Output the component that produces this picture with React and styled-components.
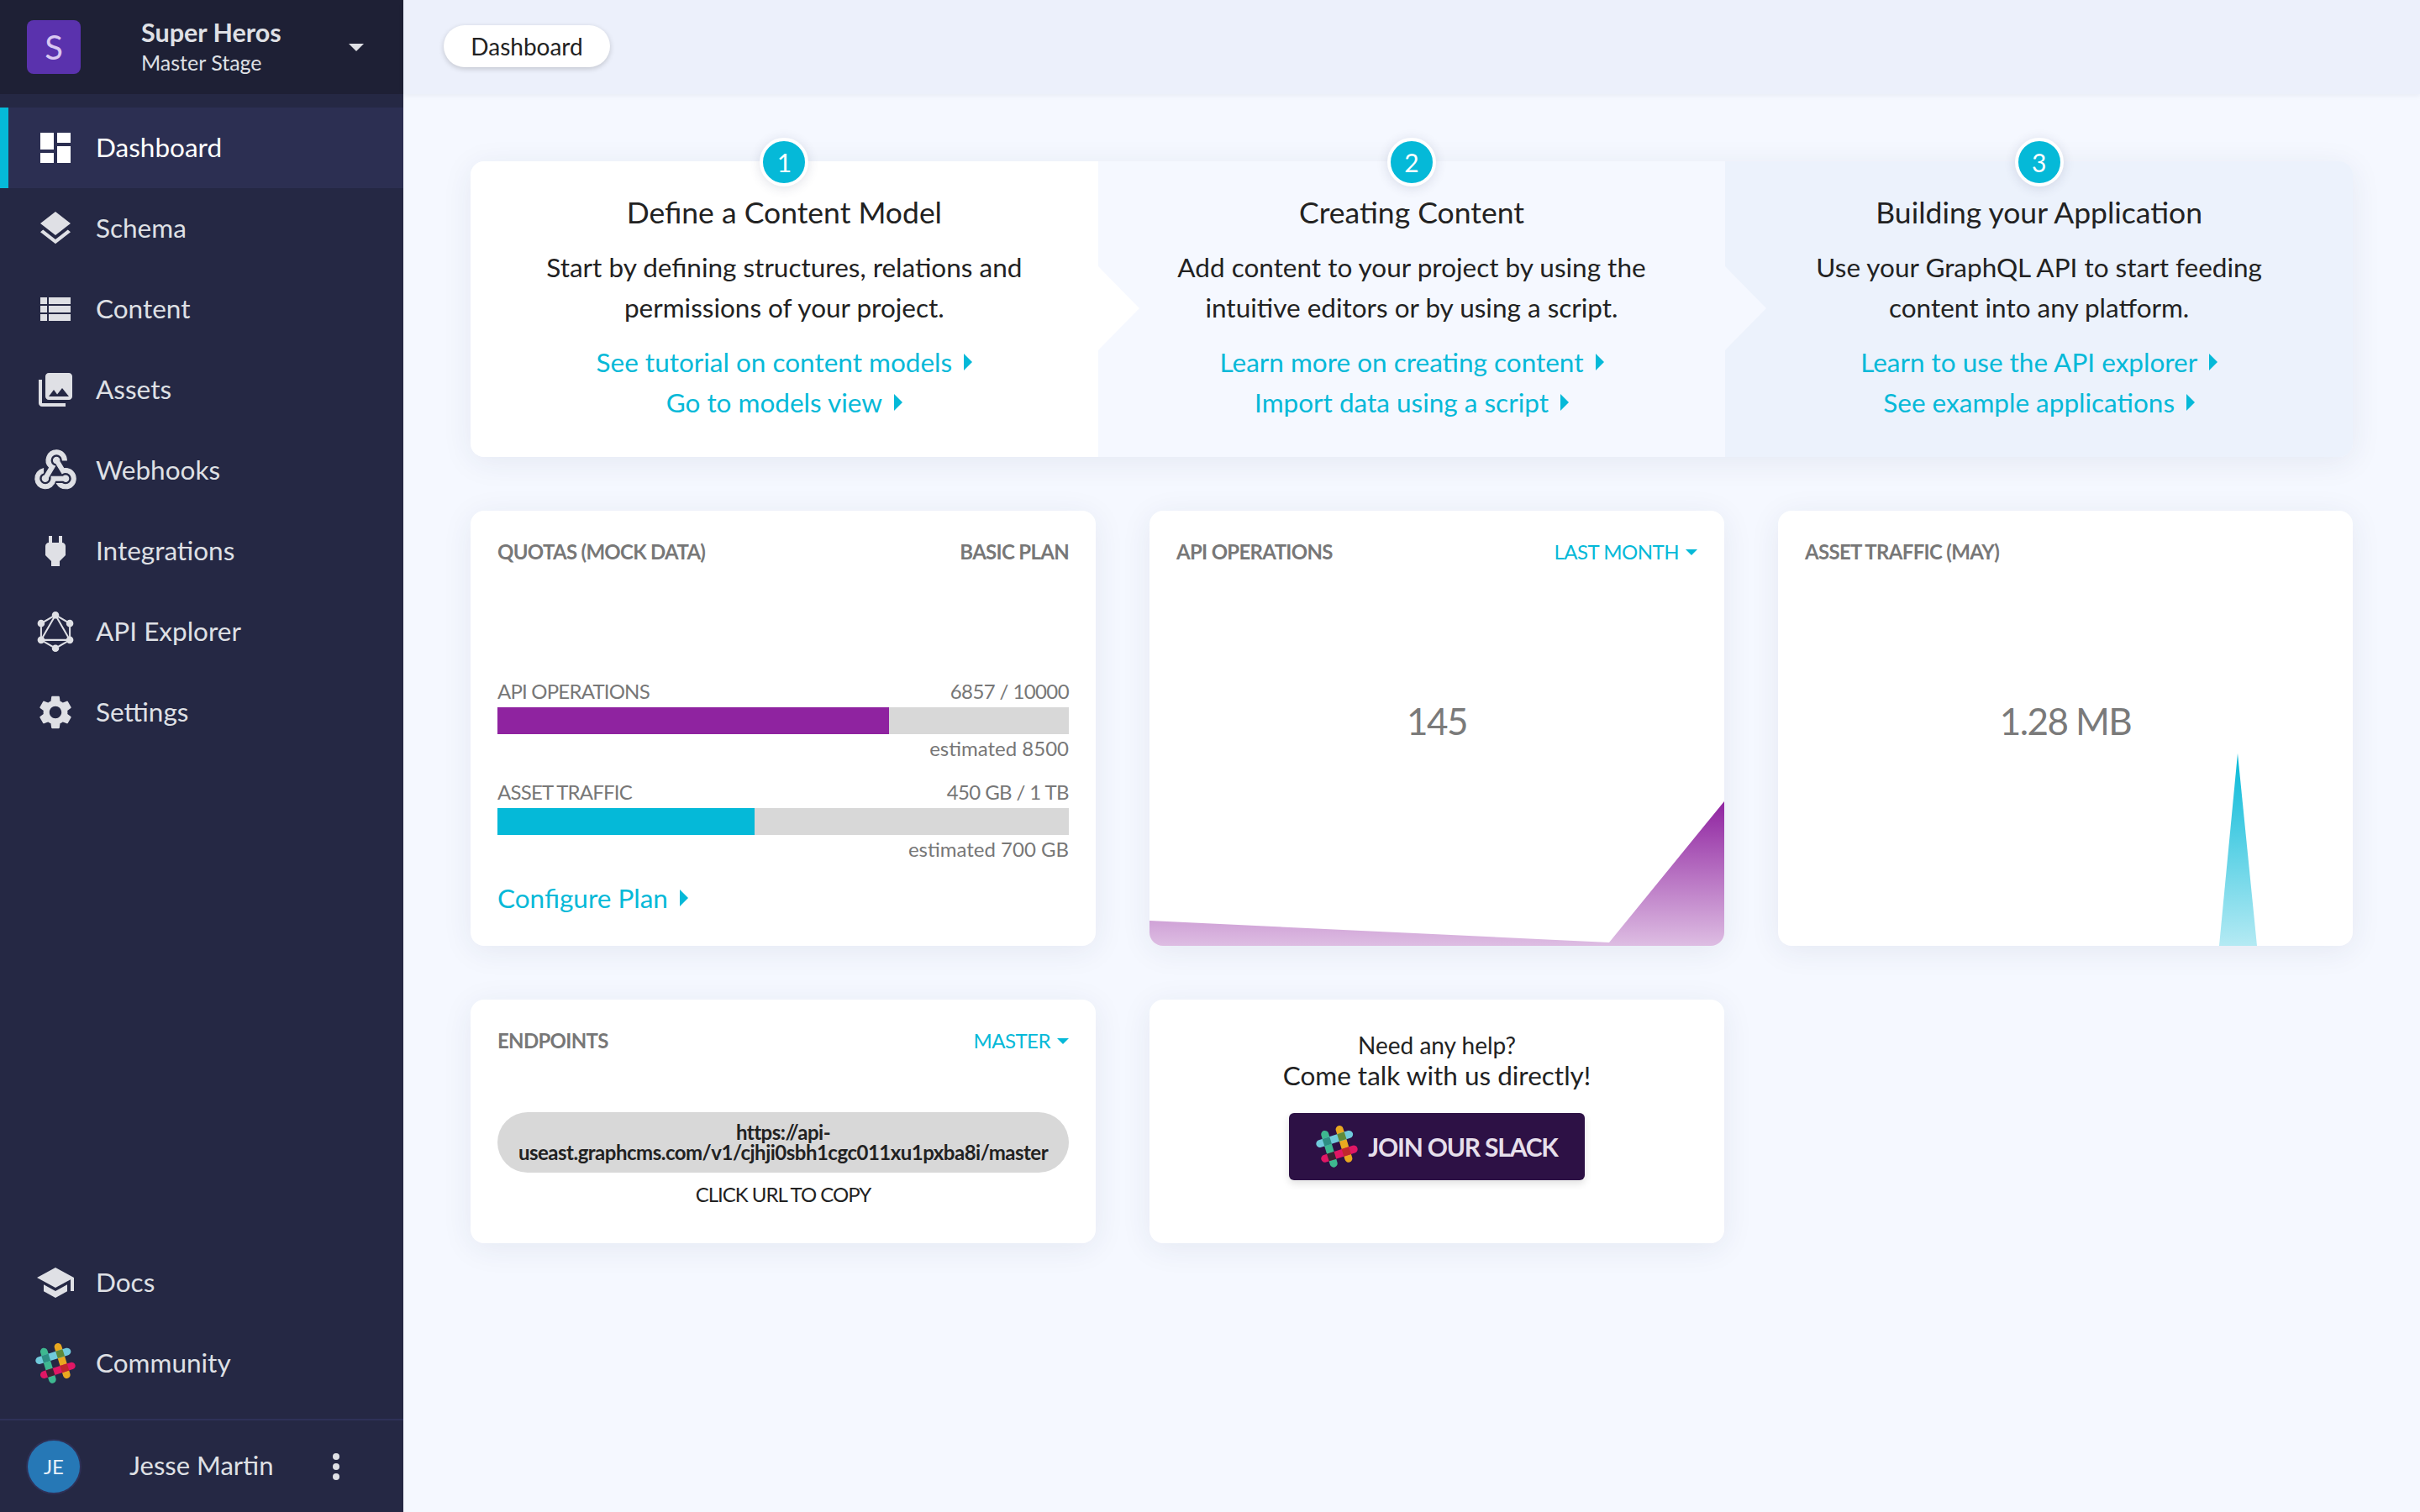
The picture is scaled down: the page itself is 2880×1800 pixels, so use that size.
import React from "react";
import styled, { createGlobalStyle } from "styled-components";
import {
  MdDashboard,
  MdLayers,
  MdViewList,
  MdPhotoLibrary,
  MdWebhook,
  MdPower,
  MdSettings,
  MdSchool,
} from "react-icons/md";
import { SiGraphql } from "react-icons/si";

const CYAN = "#05b9d8";
const PURPLE = "#8f23a0";

const GlobalStyle = createGlobalStyle`
  html, body {
    margin: 0;
    padding: 0;
    background: #f5f8ff;
    font-family: "Lato", "Open Sans", sans-serif;
    color: #222;
  }
  * { box-sizing: border-box; }
`;

const Page = styled.div`
  display: flex;
  width: 100%;
  min-height: 100vh;
`;

const Sidebar = styled.aside`
  width: 480px;
  flex-shrink: 0;
  height: 100vh;
  display: flex;
  flex-direction: column;
  background: #252844;
  color: #dfe0e5;
`;

const ProjectHeader = styled.div`
  height: 112px;
  display: flex;
  align-items: center;
  padding: 0 47px 0 32px;
  background: #1e2035;
`;

const ProjectBadge = styled.div`
  width: 64px;
  height: 64px;
  border-radius: 8px;
  background: #5a32ad;
  color: #d9c8f2;
  font-size: 40px;
  display: flex;
  align-items: center;
  justify-content: center;
`;

const ProjectText = styled.div`
  margin-left: 72px;
  flex: 1;
`;

const ProjectName = styled.div`
  font-size: 30.5px;
  font-weight: 700;
  line-height: 36px;
`;

const ProjectStage = styled.div`
  font-size: 25px;
  line-height: 36px;
`;

const Caret = styled.span`
  width: 0;
  height: 0;
  border-left: ${(p) => p.$size}px solid transparent;
  border-right: ${(p) => p.$size}px solid transparent;
  border-top: ${(p) => p.$size}px solid ${(p) => p.$color};
  margin-left: ${(p) => p.$gap || 0}px;
`;

const NavList = styled.nav`
  padding-top: ${(p) => p.$top || 0}px;
  padding-bottom: ${(p) => p.$bottom || 0}px;
`;

const NavRow = styled.div`
  height: 96px;
  display: flex;
  align-items: center;
  gap: 24px;
  padding-left: 32px;
  border-left: 10px solid ${(p) => (p.$active ? CYAN : "transparent")};
  background: ${(p) => (p.$active ? "#2c2f52" : "transparent")};
  color: ${(p) => (p.$active ? "#fff" : "#dfe0e5")};
  font-size: 31.5px;
`;

const NavIcon = styled.span`
  width: 48px;
  height: 48px;
  display: flex;
  align-items: center;
  justify-content: center;
  flex-shrink: 0;
`;

const WebhookIcon = styled(MdWebhook)`
  flex-shrink: 0;
  path:not([fill="none"]) {
    stroke: currentColor;
    stroke-width: 0.5;
  }
`;

const NavLabel = styled.span`
  padding-bottom: 3px;
`;

const Spacer = styled.div`
  flex: 1;
`;

const UserRow = styled.div`
  height: 111px;
  border-top: 2px solid #2e3158;
  display: flex;
  align-items: center;
  padding: 0 0 0 33px;
  font-size: 31px;
`;

const Avatar = styled.div`
  width: 62px;
  height: 62px;
  border-radius: 50%;
  background: #2678b6;
  box-shadow: 0 0 0 2px #2e3158;
  color: #e8f0f8;
  font-size: 24px;
  display: flex;
  align-items: center;
  justify-content: center;
`;

const UserName = styled.div`
  margin-left: 59px;
  padding-bottom: 3px;
  flex: 1;
`;

const Dots = styled.div`
  display: flex;
  flex-direction: column;
  gap: 4px;
  margin-right: 76px;
`;

const Dot = styled.span`
  width: 8px;
  height: 8px;
  border-radius: 50%;
  background: #dfe0e5;
`;

const Main = styled.main`
  flex: 1;
  min-width: 0;
`;

const TopBar = styled.header`
  height: 112px;
  background: #ecf0fb;
  box-shadow: 0 2px 6px rgba(40, 50, 90, 0.06);
  display: flex;
  align-items: center;
  padding: 0 0 2px 48px;
`;

const Crumb = styled.div`
  height: 50px;
  width: 198px;
  border-radius: 25px;
  background: #fff;
  box-shadow: 0 2px 6px rgba(0, 0, 0, 0.18);
  font-size: 28px;
  color: #222;
  display: flex;
  align-items: center;
  justify-content: center;
`;

const Content = styled.div`
  padding: 80px;
  display: flex;
  flex-direction: column;
  gap: 64px;
`;

const Steps = styled.section`
  display: grid;
  grid-template-columns: repeat(3, 1fr);
  height: 352px;
  border-radius: 16px;
  box-shadow: 0 6px 36px rgba(40, 50, 90, 0.08);
`;

const Step = styled.div`
  position: relative;
  background: ${(p) => p.$bg};
  padding-top: 39px;
  text-align: center;
  border-radius: ${(p) => p.$radius};

  ${(p) =>
    p.$arrow &&
    `&::after {
      content: "";
      position: absolute;
      z-index: 1;
      top: 125px;
      left: 100%;
      border-top: 50px solid transparent;
      border-bottom: 50px solid transparent;
      border-left: 49px solid ${p.$bg};
    }`}
`;

const StepNumber = styled.div`
  position: absolute;
  z-index: 2;
  top: -28px;
  left: 50%;
  margin-left: -29px;
  width: 58px;
  height: 58px;
  border-radius: 50%;
  border: 4px solid #fff;
  background: ${CYAN};
  color: #fff;
  font-size: 30px;
  box-shadow: 0 2px 14px rgba(40, 50, 90, 0.14);
  display: flex;
  align-items: center;
  justify-content: center;
`;

const StepTitle = styled.h2`
  margin: 0 0 19px;
  font-size: 35.5px;
  line-height: 44px;
  font-weight: 400;
  color: #222;
`;

const StepBody = styled.p`
  margin: 0 0 17px;
  font-size: 31.5px;
  line-height: 48px;
  color: #222;
`;

const StepLink = styled.div`
  font-size: 31.5px;
  line-height: 48px;
  color: ${CYAN};
  display: flex;
  align-items: center;
  justify-content: center;
`;

const Arrow = styled.span`
  width: 0;
  height: 0;
  margin-left: 14px;
  border-top: 10px solid transparent;
  border-bottom: 10px solid transparent;
  border-left: 10px solid ${CYAN};
`;

const CardGrid = styled.section`
  display: grid;
  grid-template-columns: 744px 684px 684px;
  grid-template-rows: 518px 290px;
  gap: 64px;
`;

const Card = styled.div`
  background: #fff;
  border-radius: 16px;
  box-shadow: 0 6px 36px rgba(40, 50, 90, 0.08);
  overflow: hidden;
  display: flex;
  flex-direction: column;
`;

const CardHead = styled.div`
  display: flex;
  justify-content: space-between;
  padding: 32px 32px 0;
  line-height: 34px;
  font-size: 24px;
`;

const CardTitle = styled.div`
  font-weight: 700;
  color: #777;
  letter-spacing: -0.7px;
`;

const CardSelect = styled.div`
  color: ${CYAN};
  display: flex;
  align-items: center;
  letter-spacing: -0.5px;
`;

const Quota = styled.div`
  padding: 134px 32px 0;
  display: flex;
  flex-direction: column;
`;

const QuotaLine = styled.div`
  display: flex;
  justify-content: space-between;
  font-size: 24px;
  line-height: 30px;
  color: #777;
  letter-spacing: -0.6px;
`;

const QuotaName = styled.span`
  letter-spacing: -0.8px;
`;

const Estimate = styled.div`
  margin: 2px 0 22px;
  font-size: 24px;
  line-height: 30px;
  color: #777;
  text-align: right;
`;

const Bar = styled.div`
  height: 32px;
  margin-top: 4px;
  background: #d8d8d8;
`;

const BarFill = styled.div`
  height: 100%;
  background: ${(p) => p.$color};
`;

const PlanLink = styled(StepLink)`
  justify-content: flex-start;
  line-height: 40px;
  margin-top: 1px;
`;

const BigNumber = styled.div`
  margin-top: 156px;
  font-size: 44px;
  line-height: 56px;
  color: #7a7a7a;
  text-align: center;
  letter-spacing: -1.6px;
`;

const Chart = styled.svg`
  display: block;
  margin-top: auto;
  flex-shrink: 0;
`;

const EndpointPill = styled.div`
  margin: 68px 32px 0;
  height: 72px;
  border-radius: 36px;
  background: #d8d8d8;
  font-size: 24px;
  line-height: 24px;
  font-weight: 700;
  color: #222;
  text-align: center;
  letter-spacing: -0.5px;
  display: flex;
  align-items: center;
  justify-content: center;
`;

const CopyHint = styled.div`
  margin-top: 11px;
  font-size: 24px;
  line-height: 30px;
  text-align: center;
  color: #222;
  letter-spacing: -1px;
`;

const HelpCard = styled(Card)`
  align-items: center;
  padding-top: 36px;
  text-align: center;
`;

const HelpSmall = styled.div`
  font-size: 28px;
  line-height: 36px;
`;

const HelpLarge = styled.div`
  font-size: 31.5px;
  line-height: 37px;
`;

const SlackButton = styled.div`
  margin-top: 26px;
  width: 352px;
  height: 80px;
  border-radius: 6px;
  background: #2d1145;
  box-shadow: 0 4px 10px rgba(0, 0, 0, 0.12);
  color: #e6dfeb;
  font-size: 30px;
  font-weight: 700;
  letter-spacing: -1.2px;
  display: flex;
  align-items: center;
  justify-content: center;
  gap: 12px;
`;

const OVERLAPS = [
  { x: 38.3, y: 54.2, fill: "#2d8f83" },
  { x: 88.8, y: 38, fill: "#5f8a3a" },
  { x: 53.7, y: 105.7, fill: "#3a2233" },
  { x: 104.6, y: 89.2, fill: "#c0272d" },
];

const SlackMark = ({ size = 48 }) => (
  <svg width={size} height={size} viewBox="0 0 144 144" aria-hidden="true">
    <g fill="none" strokeWidth="26" strokeLinecap="round">
      <path d="M31 30 L61 130" stroke="#3eb890" />
      <path d="M81 13 L112 113" stroke="#e9a820" />
      <path d="M14 62 L114 30" stroke="#70cadb" />
      <path d="M31 113 L130 81" stroke="#e01765" />
    </g>
    {OVERLAPS.map((o) => (
      <rect
        key={o.fill}
        x={o.x - 13}
        y={o.y - 13}
        width="26"
        height="26"
        fill={o.fill}
        transform={`rotate(-17.7 ${o.x} ${o.y})`}
      />
    ))}
  </svg>
);

const NAV_TOP = [
  { label: "Dashboard", icon: <MdDashboard size={48} />, active: true },
  { label: "Schema", icon: <MdLayers size={48} /> },
  { label: "Content", icon: <MdViewList size={48} /> },
  { label: "Assets", icon: <MdPhotoLibrary size={48} /> },
  { label: "Webhooks", icon: <WebhookIcon size={58} /> },
  { label: "Integrations", icon: <MdPower size={48} /> },
  { label: "API Explorer", icon: <SiGraphql size={48} /> },
  { label: "Settings", icon: <MdSettings size={48} /> },
];

const NAV_BOTTOM = [
  { label: "Docs", icon: <MdSchool size={48} /> },
  { label: "Community", icon: <SlackMark /> },
];

const STEPS = [
  {
    n: 1,
    bg: "#fff",
    radius: "16px 0 0 16px",
    arrow: true,
    title: "Define a Content Model",
    lines: ["Start by defining structures, relations and", "permissions of your project."],
    links: ["See tutorial on content models", "Go to models view"],
  },
  {
    n: 2,
    bg: "#f5f8ff",
    radius: "0",
    arrow: true,
    title: "Creating Content",
    lines: ["Add content to your project by using the", "intuitive editors or by using a script."],
    links: ["Learn more on creating content", "Import data using a script"],
  },
  {
    n: 3,
    bg: "#ecf2fc",
    radius: "0 16px 16px 0",
    title: "Building your Application",
    lines: ["Use your GraphQL API to start feeding", "content into any platform."],
    links: ["Learn to use the API explorer", "See example applications"],
  },
];

const QUOTAS = [
  { label: "API OPERATIONS", value: "6857 / 10000", pct: 68.57, color: PURPLE, est: "estimated 8500" },
  { label: "ASSET TRAFFIC", value: "450 GB / 1 TB", pct: 45, color: CYAN, est: "estimated 700 GB" },
];

const NavItem = ({ item }) => (
  <NavRow $active={item.active}>
    <NavIcon>{item.icon}</NavIcon>
    <NavLabel>{item.label}</NavLabel>
  </NavRow>
);

export default function App() {
  return (
    <Page>
      <GlobalStyle />
      <Sidebar>
        <ProjectHeader>
          <ProjectBadge>S</ProjectBadge>
          <ProjectText>
            <ProjectName>Super Heros</ProjectName>
            <ProjectStage>Master Stage</ProjectStage>
          </ProjectText>
          <Caret $size={9} $color="#dfe0e5" />
        </ProjectHeader>
        <NavList $top={16}>
          {NAV_TOP.map((item) => (
            <NavItem key={item.label} item={item} />
          ))}
        </NavList>
        <Spacer />
        <NavList $bottom={18}>
          {NAV_BOTTOM.map((item) => (
            <NavItem key={item.label} item={item} />
          ))}
        </NavList>
        <UserRow>
          <Avatar>JE</Avatar>
          <UserName>Jesse Martin</UserName>
          <Dots>
            <Dot />
            <Dot />
            <Dot />
          </Dots>
        </UserRow>
      </Sidebar>
      <Main>
        <TopBar>
          <Crumb>Dashboard</Crumb>
        </TopBar>
        <Content>
          <Steps>
            {STEPS.map((s) => (
              <Step key={s.n} $bg={s.bg} $radius={s.radius} $arrow={s.arrow}>
                <StepNumber>{s.n}</StepNumber>
                <StepTitle>{s.title}</StepTitle>
                <StepBody>
                  {s.lines[0]}
                  <br />
                  {s.lines[1]}
                </StepBody>
                {s.links.map((l) => (
                  <StepLink key={l}>
                    {l}
                    <Arrow />
                  </StepLink>
                ))}
              </Step>
            ))}
          </Steps>
          <CardGrid>
            <Card>
              <CardHead>
                <CardTitle>QUOTAS (MOCK DATA)</CardTitle>
                <CardTitle>BASIC PLAN</CardTitle>
              </CardHead>
              <Quota>
                {QUOTAS.map((q) => (
                  <React.Fragment key={q.label}>
                    <QuotaLine>
                      <QuotaName>{q.label}</QuotaName>
                      <span>{q.value}</span>
                    </QuotaLine>
                    <Bar>
                      <BarFill $color={q.color} style={{ width: `${q.pct}%` }} />
                    </Bar>
                    <Estimate>{q.est}</Estimate>
                  </React.Fragment>
                ))}
                <PlanLink>
                  Configure Plan
                  <Arrow />
                </PlanLink>
              </Quota>
            </Card>
            <Card>
              <CardHead>
                <CardTitle>API OPERATIONS</CardTitle>
                <CardSelect>
                  LAST MONTH
                  <Caret $size={7} $color={CYAN} $gap={8} />
                </CardSelect>
              </CardHead>
              <BigNumber>145</BigNumber>
              <Chart width="684" height="172" viewBox="0 0 684 172" aria-hidden="true">
                <defs>
                  <linearGradient id="apiFill" x1="0" y1="0" x2="0" y2="1">
                    <stop offset="0" stopColor={PURPLE} />
                    <stop offset="1" stopColor={PURPLE} stopOpacity="0.3" />
                  </linearGradient>
                </defs>
                <polygon
                  points="0,142 547,168 684,0 684,172 0,172"
                  fill="url(#apiFill)"
                />
              </Chart>
            </Card>
            <Card>
              <CardHead>
                <CardTitle>ASSET TRAFFIC (MAY)</CardTitle>
              </CardHead>
              <BigNumber>1.28 MB</BigNumber>
              <Chart width="684" height="229" viewBox="0 0 684 229" aria-hidden="true">
                <defs>
                  <linearGradient id="assetFill" x1="0" y1="0" x2="0" y2="1">
                    <stop offset="0" stopColor={CYAN} />
                    <stop offset="1" stopColor={CYAN} stopOpacity="0.3" />
                  </linearGradient>
                </defs>
                <polygon points="547,0 570,229 525,229" fill="url(#assetFill)" />
              </Chart>
            </Card>
            <Card>
              <CardHead>
                <CardTitle>ENDPOINTS</CardTitle>
                <CardSelect>
                  MASTER
                  <Caret $size={7} $color={CYAN} $gap={8} />
                </CardSelect>
              </CardHead>
              <EndpointPill>
                https://api-
                <br />
                useast.graphcms.com/v1/cjhji0sbh1cgc011xu1pxba8i/master
              </EndpointPill>
              <CopyHint>CLICK URL TO COPY</CopyHint>
            </Card>
            <HelpCard>
              <HelpSmall>Need any help?</HelpSmall>
              <HelpLarge>Come talk with us directly!</HelpLarge>
              <SlackButton>
                <SlackMark size={50} />
                JOIN OUR SLACK
              </SlackButton>
            </HelpCard>
          </CardGrid>
        </Content>
      </Main>
    </Page>
  );
}
